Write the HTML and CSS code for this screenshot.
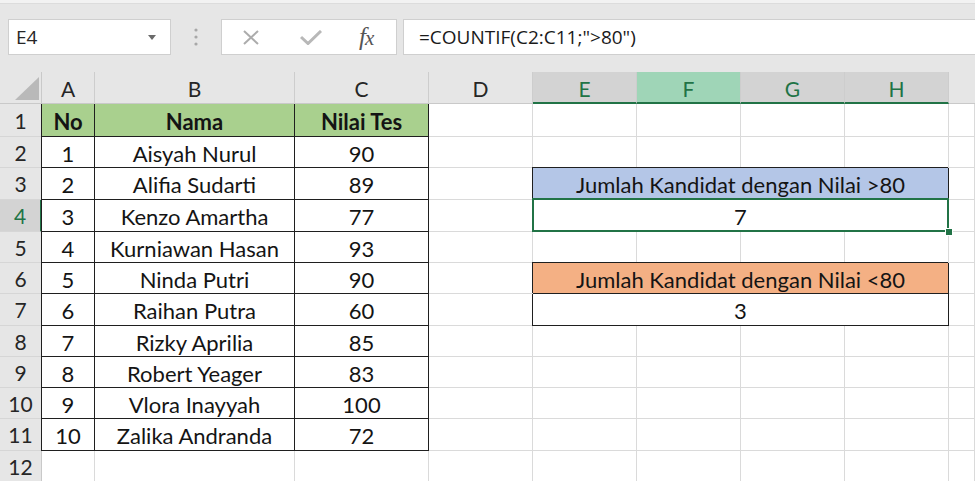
FILE: index.html
```html
<!DOCTYPE html>
<html lang="id">
	<head>
		<meta charset="utf-8">
		<title>COUNTIF</title>
		<link rel="stylesheet" href="styles.css">
	</head>
	<body>
	<div class="top-strip"></div>
	<div class="formula-bar">
		<div class="name-box">
			<span>E4</span>
			<svg class="drop" width="8" height="5" viewBox="0 0 8 5"><path d="M0 0 L8 0 L4 5 Z" fill="#6a6a6a"/></svg>
		</div>
		<div class="grip">
			<svg width="4" height="18" viewBox="0 0 4 18"><circle cx="2" cy="2" r="1.6" fill="#a8a8a8"/><circle cx="2" cy="9" r="1.6" fill="#a8a8a8"/><circle cx="2" cy="16" r="1.6" fill="#a8a8a8"/></svg>
		</div>
		<div class="fx-buttons">
			<svg class="icon-x" width="20" height="15" viewBox="0 0 20 15"><path d="M3 1 L17 14 M17 1 L3 14" stroke="#acacac" stroke-width="2" fill="none"/></svg>
			<svg class="icon-ok" width="22" height="15" viewBox="0 0 22 15"><path d="M1 7 L8 13.5 L21 1" stroke="#b8b8b8" stroke-width="3" fill="none"/></svg>
			<span class="fx">f<span>x</span></span>
		</div>
		<div class="formula">=COUNTIF(C2:C11;"&gt;80")</div>
	</div>

	<div class="sheet">
		<!-- column headers -->
		<div class="corner"><svg width="24" height="23" viewBox="0 0 24 23"><path d="M24 0 L24 23 L0 23 Z" fill="#b9b9b9"/></svg></div>
		<div class="col-head">A</div>
		<div class="col-head">B</div>
		<div class="col-head">C</div>
		<div class="col-head">D</div>
		<div class="col-head sel">E</div>
		<div class="col-head sel hot">F</div>
		<div class="col-head sel">G</div>
		<div class="col-head sel">H</div>
		<div class="col-head last"></div>

		<!-- 1 -->
		<div class="row-head">1</div>
		<div class="cell t th first">No</div>
		<div class="cell t th">Nama</div>
		<div class="cell t th">Nilai Tes</div>
		<div class="cell"></div><div class="cell"></div><div class="cell"></div><div class="cell"></div><div class="cell"></div><div class="cell"></div>

		<!-- 2 -->
		<div class="row-head">2</div>
		<div class="cell t first">1</div>
		<div class="cell t">Aisyah Nurul</div>
		<div class="cell t">90</div>
		<div class="cell"></div><div class="cell"></div><div class="cell"></div><div class="cell"></div><div class="cell"></div><div class="cell"></div>

		<!-- 3 -->
		<div class="row-head">3</div>
		<div class="cell t first">2</div>
		<div class="cell t">Alifia Sudarti</div>
		<div class="cell t">89</div>
		<div class="cell"></div>
		<div class="cell merged blue">Jumlah Kandidat dengan Nilai &gt;80</div>
		<div class="cell"></div>

		<!-- 4 -->
		<div class="row-head sel">4</div>
		<div class="cell t first">3</div>
		<div class="cell t">Kenzo Amartha</div>
		<div class="cell t">77</div>
		<div class="cell"></div>
		<div class="cell merged result active">7</div>
		<div class="cell"></div>

		<!-- 5 -->
		<div class="row-head">5</div>
		<div class="cell t first">4</div>
		<div class="cell t">Kurniawan Hasan</div>
		<div class="cell t">93</div>
		<div class="cell"></div><div class="cell"></div><div class="cell"></div><div class="cell"></div><div class="cell"></div><div class="cell"></div>

		<!-- 6 -->
		<div class="row-head">6</div>
		<div class="cell t first">5</div>
		<div class="cell t">Ninda Putri</div>
		<div class="cell t">90</div>
		<div class="cell"></div>
		<div class="cell merged orange">Jumlah Kandidat dengan Nilai &lt;80</div>
		<div class="cell"></div>

		<!-- 7 -->
		<div class="row-head">7</div>
		<div class="cell t first">6</div>
		<div class="cell t">Raihan Putra</div>
		<div class="cell t">60</div>
		<div class="cell"></div>
		<div class="cell merged result">3</div>
		<div class="cell"></div>

		<!-- 8 -->
		<div class="row-head">8</div>
		<div class="cell t first">7</div>
		<div class="cell t">Rizky Aprilia</div>
		<div class="cell t">85</div>
		<div class="cell"></div><div class="cell"></div><div class="cell"></div><div class="cell"></div><div class="cell"></div><div class="cell"></div>

		<!-- 9 -->
		<div class="row-head">9</div>
		<div class="cell t first">8</div>
		<div class="cell t">Robert Yeager</div>
		<div class="cell t">83</div>
		<div class="cell"></div><div class="cell"></div><div class="cell"></div><div class="cell"></div><div class="cell"></div><div class="cell"></div>

		<!-- 10 -->
		<div class="row-head">10</div>
		<div class="cell t first">9</div>
		<div class="cell t">Vlora Inayyah</div>
		<div class="cell t">100</div>
		<div class="cell"></div><div class="cell"></div><div class="cell"></div><div class="cell"></div><div class="cell"></div><div class="cell"></div>

		<!-- 11 -->
		<div class="row-head">11</div>
		<div class="cell t first">10</div>
		<div class="cell t">Zalika Andranda</div>
		<div class="cell t">72</div>
		<div class="cell"></div><div class="cell"></div><div class="cell"></div><div class="cell"></div><div class="cell"></div><div class="cell"></div>

		<!-- 12 -->
		<div class="row-head">12</div>
		<div class="cell"></div><div class="cell"></div><div class="cell"></div>
		<div class="cell"></div><div class="cell"></div><div class="cell"></div><div class="cell"></div><div class="cell"></div><div class="cell"></div>
	</div>
	</body>
</html>
```

FILE: styles.css
```css
* {
	box-sizing: border-box;
}

body {
	margin: 0;
	width: 975px;
	height: 481px;
	overflow: hidden;

	background: #e6e6e6;
	color: #141414;

	font-family: "Lato", "Liberation Sans", sans-serif;
	font-size: 22px;
}

/* formula bar */

.top-strip {
	height: 4px;
	background: #f2f2f2;
	border-bottom: 1px solid #dcdcdc;
}

.formula-bar {
	display: flex;
	align-items: flex-start;
	height: 68px;
	padding: 15px 0 0 8px;

	font-family: "Open Sans", "Noto Sans", sans-serif;
	font-size: 19px;
}

.name-box {
	display: flex;
	align-items: center;
	justify-content: space-between;
	width: 163px;
	height: 36px;
	padding: 0 14px 0 7px;

	background: #fff;
	border: 1px solid #cfcfcf;
	color: #262626;
}

.grip {
	display: flex;
	align-items: center;
	justify-content: center;
	width: 50px;
	height: 36px;
}

.fx-buttons {
	display: flex;
	align-items: center;
	width: 176px;
	height: 36px;
	padding-left: 19px;

	background: #fff;
	border: 1px solid #cfcfcf;
}

.icon-x {
	margin-right: 39px;
}

.icon-ok {
	margin-right: 37px;
}

.fx {
	font-family: "Liberation Serif", "DejaVu Serif", serif;
	font-style: italic;
	font-size: 25px;
	color: #555;
	letter-spacing: -1px;
}

.fx span {
	font-size: 21px;
}

.formula {
	flex: 1;
	display: flex;
	align-items: center;
	height: 36px;
	margin-left: 6px;
	padding-left: 15px;

	background: #fff;
	border: 1px solid #cfcfcf;
	border-right: none;
	color: #1a1a1a;
}

/* sheet */

.sheet {
	display: grid;
	grid-template-columns: 42px 53px 200px 134px 104px 104px 104px 104px 104px 1fr;
	grid-template-rows: 32px 33px 31px 32px 32px 31px 31px 32px 31px 31px 31px 32px 32px;
	background: #fff;
}

.corner,
.col-head,
.row-head {
	display: flex;
	align-items: center;
	justify-content: center;

	background: #e6e6e6;
	color: #262626;
	font-size: 21px;
}

.corner {
	align-items: flex-end;
	justify-content: flex-end;
	padding: 0 2px 3px 0;
	border-right: 1px solid #c9c9c9;
	border-bottom: 1px solid #c9c9c9;
}

.col-head {
	padding-top: 2px;
	border-right: 1px solid #cdcdcd;
	border-bottom: 1px solid #c9c9c9;
}

.col-head.last {
	border-right: none;
}

.col-head.sel {
	background: #d3d3d3;
	color: #217346;
	border-bottom: 2px solid #217346;
}

.col-head.hot {
	background: #9fd5b7;
}

.row-head {
	border-right: 1px solid #c9c9c9;
	border-bottom: 1px solid #d6d6d6;
}

.row-head.sel {
	background: #d3d3d3;
	color: #217346;
	border-right: 2px solid #217346;
}

.cell {
	display: flex;
	align-items: center;
	justify-content: center;
	padding-top: 2px;

	border-right: 1px solid #dadada;
	border-bottom: 1px solid #dadada;
	white-space: nowrap;
}

.cell.t {
	border-right-color: #1f1f1f;
	border-bottom-color: #1f1f1f;
}

.cell.first {
	box-shadow: -1px 0 0 #1f1f1f;
}

.cell.th {
	background: #a9d08e;
	font-weight: bold;
}

.cell.merged {
	grid-column: span 4;
	border-right-color: #1f1f1f;
	border-bottom-color: #1f1f1f;
	box-shadow: -1px -1px 0 #1f1f1f;
}

.cell.result {
	box-shadow: -1px 0 0 #1f1f1f;
}

.cell.blue {
	background: #b4c6e7;
}

.cell.orange {
	background: #f4b084;
}

.cell.active {
	position: relative;
}

/* selection frame and fill handle */
.cell.active::before {
	content: "";
	position: absolute;
	top: -2px;
	left: -1px;
	right: -1px;
	bottom: -1px;
	border: 2px solid #217346;
}

.cell.active::after {
	content: "";
	position: absolute;
	right: -4px;
	bottom: -4px;
	width: 6px;
	height: 6px;
	background: #217346;
	outline: 1px solid #fff;
}
```
